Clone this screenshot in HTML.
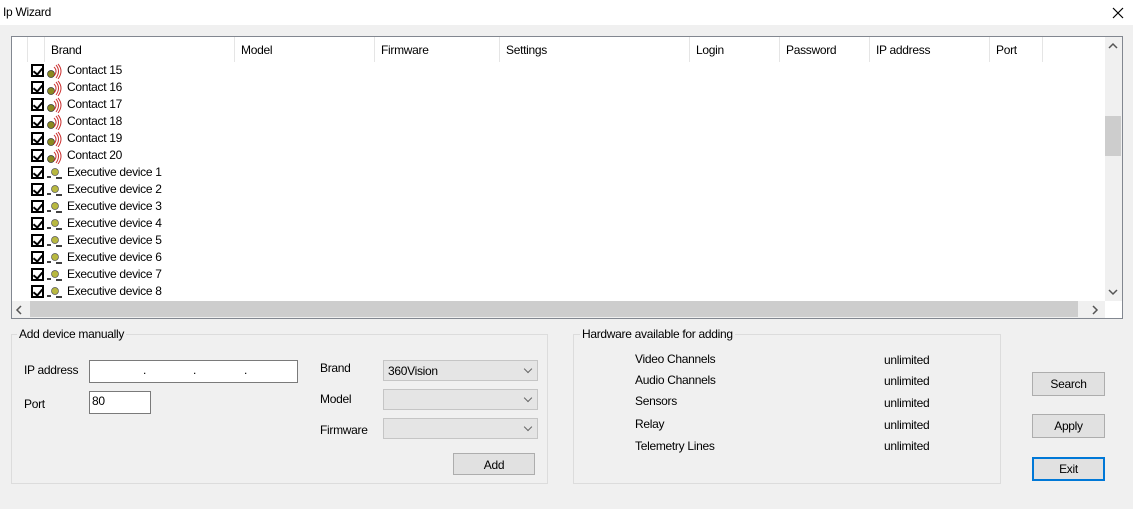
<!DOCTYPE html>
<html><head><style>
*{box-sizing:border-box;margin:0;padding:0}
body{width:1133px;height:509px;background:#f0f0f0;font:12px "Liberation Sans",sans-serif;letter-spacing:-0.3px;color:#000;position:relative;overflow:hidden}
.a{position:absolute;white-space:nowrap}
.hd{position:absolute;top:0;height:25px;border-right:1px solid #e5e5e5;padding:6px 0 0 6px;white-space:nowrap}
.row{position:absolute;left:30px;height:17px;width:300px;white-space:nowrap}
.cb{position:absolute;left:1px;top:2px;width:13px;height:13px;border:2px solid #000;background:#fff}
.cb:after{content:"";position:absolute;left:2px;top:0px;width:4px;height:7px;border:solid #000;border-width:0 2px 2px 0;transform:rotate(40deg)}
.tx{position:absolute;left:37px;top:1px}
.btn{position:absolute;background:#e1e1e1;border:1px solid #adadad;text-align:center;padding-top:4px}
.cmb{position:absolute;background:#e5e5e5;border:1px solid #c5c5c5;height:21px;padding:3px 0 0 4px}
.cmb:after{content:"";position:absolute;right:6px;top:5px;width:5px;height:5px;border:solid #666;border-width:0 1px 1px 0;transform:rotate(45deg)}
.gb{position:absolute;border:1px solid #dcdcdc}
.gl{position:absolute;background:#f0f0f0;padding:0 2px}
</style></head><body>
<div class="a" style="left:0;top:0;width:1133px;height:25px;background:#fff"></div>
<div class="a" style="left:3px;top:5px">Ip Wizard</div>
<svg class="a" style="left:1112px;top:7px" width="12" height="12"><path d="M1 1L11 11M11 1L1 11" stroke="#000" stroke-width="1.2"/></svg>

<div class="a" style="left:11px;top:36px;width:1112px;height:283px;border:1px solid #828790;background:#fff;overflow:hidden">
 <div class="hd" style="left:0;width:16px"></div>
 <div class="hd" style="left:16px;width:17px"></div>
 <div class="hd" style="left:33px;width:190px">Brand</div>
 <div class="hd" style="left:223px;width:140px">Model</div>
 <div class="hd" style="left:363px;width:125px">Firmware</div>
 <div class="hd" style="left:488px;width:190px">Settings</div>
 <div class="hd" style="left:678px;width:90px">Login</div>
 <div class="hd" style="left:768px;width:90px">Password</div>
 <div class="hd" style="left:858px;width:120px">IP address</div>
 <div class="hd" style="left:978px;width:53px">Port</div>
 <div class="a" style="left:1093px;top:0;width:17px;height:264px;background:#f0f0f0"></div>
 <div class="a" style="left:1093px;top:79px;width:16px;height:40px;background:#cdcdcd"></div>
 <svg class="a" style="left:1096px;top:5px" width="10" height="8"><path d="M1 6L5 2L9 6" fill="none" stroke="#555" stroke-width="1.5"/></svg>
 <svg class="a" style="left:1096px;top:251px" width="10" height="8"><path d="M1 2L5 6L9 2" fill="none" stroke="#555" stroke-width="1.5"/></svg>
 <div class="a" style="left:0;top:264px;width:1093px;height:17px;background:#f0f0f0"></div>
 <div class="a" style="left:18px;top:264px;width:1048px;height:16px;background:#cdcdcd"></div>
 <svg class="a" style="left:3px;top:268px" width="8" height="10"><path d="M6 1L2 5L6 9" fill="none" stroke="#555" stroke-width="1.5"/></svg>
 <svg class="a" style="left:1079px;top:268px" width="8" height="10"><path d="M2 1L6 5L2 9" fill="none" stroke="#555" stroke-width="1.5"/></svg>
</div>

<div id="rows"></div>
<script>
var names=["Contact 15","Contact 16","Contact 17","Contact 18","Contact 19","Contact 20"];
for(var i=1;i<=8;i++)names.push("Executive device "+i);
var h="";
names.forEach(function(n,i){
 var ic=n[0]=="C"?'<svg class="a" style="left:16px;top:1px" width="18" height="16"><circle cx="5" cy="11" r="3.5" fill="#8a8a20" stroke="#333" stroke-width=".7"/><path d="M8 4Q12 8 8 13M10 2Q15 8 10 15M12 1Q18 8 12 16" fill="none" stroke="#c33" stroke-width="1"/></svg>'
 :'<svg class="a" style="left:16px;top:1px" width="18" height="16"><circle cx="9" cy="7" r="3.5" fill="#b8b840" stroke="#555" stroke-width=".7"/><path d="M1 12h4M10 13h6" stroke="#000" stroke-width="1.5"/></svg>';
 h+='<div class="row" style="top:'+(62+17*i)+'px"><div class="cb"></div>'+ic+'<div class="tx">'+n+'</div></div>';
});
document.getElementById("rows").innerHTML=h;
</script>

<div class="gb" style="left:11px;top:334px;width:537px;height:150px"></div>
<div class="gl a" style="left:17px;top:327px">Add device manually</div>
<div class="a" style="left:24px;top:363px">IP address</div>
<div class="a" style="left:89px;top:360px;width:209px;height:23px;background:#fff;border:1px solid #7a7a7a"></div>
<div class="a" style="left:143px;top:363px">.</div><div class="a" style="left:193px;top:363px">.</div><div class="a" style="left:244px;top:363px">.</div>
<div class="a" style="left:24px;top:397px">Port</div>
<div class="a" style="left:89px;top:391px;width:62px;height:23px;background:#fff;border:1px solid #7a7a7a;padding:2px 0 0 2px">80</div>
<div class="a" style="left:320px;top:361px">Brand</div>
<div class="a" style="left:320px;top:392px">Model</div>
<div class="a" style="left:320px;top:423px">Firmware</div>
<div class="cmb" style="left:383px;top:360px;width:155px">360Vision</div>
<div class="cmb" style="left:383px;top:389px;width:155px"></div>
<div class="cmb" style="left:383px;top:418px;width:155px"></div>
<div class="btn" style="left:453px;top:453px;width:82px;height:22px">Add</div>

<div class="gb" style="left:573px;top:334px;width:428px;height:150px"></div>
<div class="gl a" style="left:580px;top:327px">Hardware available for adding</div>
<div class="a" style="left:635px;top:352px">Video Channels</div><div class="a" style="left:884px;top:353px">unlimited</div>
<div class="a" style="left:635px;top:373px">Audio Channels</div><div class="a" style="left:884px;top:374px">unlimited</div>
<div class="a" style="left:635px;top:394px">Sensors</div><div class="a" style="left:884px;top:396px">unlimited</div>
<div class="a" style="left:635px;top:417px">Relay</div><div class="a" style="left:884px;top:418px">unlimited</div>
<div class="a" style="left:635px;top:439px">Telemetry Lines</div><div class="a" style="left:884px;top:439px">unlimited</div>

<div class="btn" style="left:1032px;top:372px;width:73px;height:24px">Search</div>
<div class="btn" style="left:1032px;top:414px;width:73px;height:24px">Apply</div>
<div class="btn" style="left:1032px;top:457px;width:73px;height:24px;border:2px solid #0078d7;padding-top:3px">Exit</div>
</body></html>
